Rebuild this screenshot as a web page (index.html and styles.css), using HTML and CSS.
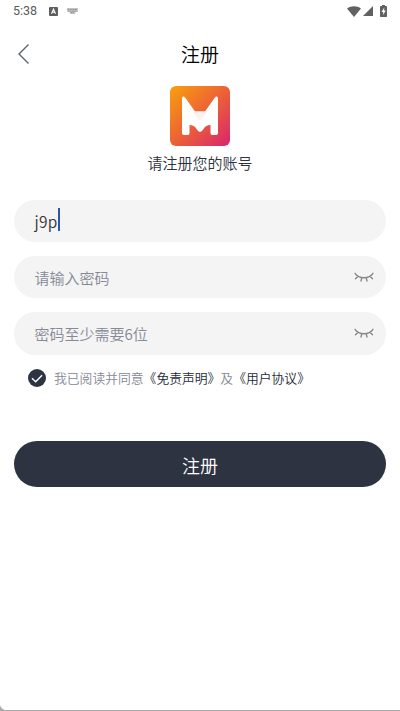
FILE: index.html
```html
<!DOCTYPE html>
<html lang="zh-CN">
<head>
<meta charset="utf-8">
<title>注册</title>
<link rel="stylesheet" href="styles.css">
</head>
<body>
<div class="screen">
  <header class="status">
    <span class="time">5:38</span>
    <svg class="app-badge" width="9" height="9" viewBox="0 0 9 9"><rect width="9" height="9" rx="1" fill="#5e5e5e"/><path d="M2.5 6.7 4.5 2.2 6.5 6.7M3.3 5.3h2.4" fill="none" stroke="#fff" stroke-width="1.1"/></svg>
    <svg class="keyboard" width="11" height="6" viewBox="0 0 11 6"><path d="M0 0h11v4H8.500L8 6H3L2.500 4H0z" fill="#c4c4c4"/><path d="M1 1.500h9M1.500 3.200h8M4 4.700h3" stroke="#888" stroke-dasharray="1 .7" fill="none"/></svg>
    <span class="spacer"></span>
    <svg width="14" height="11" viewBox="0 0 14 11"><path d="M0 2.600C4-.6 10-.6 14 2.600L7 11z" fill="#616161"/></svg>
    <svg class="signal" width="10" height="10" viewBox="0 0 10 10"><path d="M10 0v10H0z" fill="#616161"/></svg>
    <svg class="battery" width="7" height="12" viewBox="0 0 7 12"><path d="M2 0h3v1h1.200q.8 0 .8.800v9.400q0 .8-.8.800H.8q-.8 0-.8-.8V1.800Q0 1 .8 1H2z" fill="#616161"/><path d="M4.300 2.500 1.500 7h1.700v3L5.700 5.600H4.100z" fill="#fff"/></svg>
  </header>
  <nav class="bar">
    <svg width="12" height="20" viewBox="0 0 12 20"><path d="M10.500.600 1 10l9.500 9.400" fill="none" stroke="#5d636e" stroke-width="1.400"/></svg>
    <h1>注册</h1>
  </nav>
  <main>
    <svg class="logo" width="60" height="60" viewBox="0 0 60 60">
      <defs><linearGradient id="g" x1="0" y1="0" x2="1" y2="1"><stop offset="0" stop-color="#f9a10b"/><stop offset=".5" stop-color="#ec6236"/><stop offset="1" stop-color="#d9246f"/></linearGradient></defs>
      <rect width="60" height="60" rx="6" fill="url(#g)"/>
      <path d="M12 12.500Q12 10 14 10.500L15.500 12 25 25.500H35L44.500 12 46 10.500Q48 10 48 12.500V47Q48 49 46 49H42Q40.500 49 40.500 47V39Q35.500 39 33.500 43 30 49 26.500 43 24.500 39 19.500 39V47Q19.500 49 18 49H14Q12 49 12 47z" fill="#fff"/>
      <path d="M22 25.500H37L30 35z" fill="#fdf0ee"/>
    </svg>
    <p class="intro">请注册您的账号</p>
    <div class="field value"><span>j9p</span><i class="caret"></i></div>
    <div class="field"><span>请输入密码</span><svg class="eye" width="20" height="11" viewBox="0 0 20 11"><path d="M1 1.300Q4 5.700 10 5.700T19 1.300M4 4.300 1.500 6.800M16 4.300 18.500 6.800M7.700 6 7 9M12.300 6 13 9"/></svg></div>
    <div class="field last"><span>密码至少需要6位</span><svg class="eye" width="20" height="11" viewBox="0 0 20 11"><path d="M1 1.300Q4 5.700 10 5.700T19 1.300M4 4.300 1.500 6.800M16 4.300 18.500 6.800M7.700 6 7 9M12.300 6 13 9"/></svg></div>
    <div class="agree">
      <svg width="18" height="18" viewBox="0 0 18 18"><circle cx="9" cy="9" r="9" fill="#2d3340"/><path d="M4 9.300 7.700 12.800 14 6.200" fill="none" stroke="#fff" stroke-width="1.400"/></svg>
      <p>我已阅读并同意<b>《免责声明》</b>及<b>《用户协议》</b></p>
    </div>
    <div class="submit">注册</div>
  </main>
  <svg class="corner" width="5" height="5" viewBox="0 0 5 5"><path d="M0 0Q1 4 5 5H0z" fill="#aaa"/></svg>
</div>
</body>
</html>
```
FILE: styles.css
```css
* { box-sizing: border-box; }
body {
  margin: 0;
  background: #fff;
  font-family: "Noto Sans CJK SC", sans-serif;
  font-weight: 350;
}
svg { display: block; flex: none; }
h1, p { margin: 0; font-weight: 350; }
.screen {
  height: 711px;
  display: flex;
  flex-direction: column;
  border-bottom: 1px solid #a9a9a9;
  overflow: hidden;
}
.status {
  height: 22px;
  display: flex;
  align-items: center;
  padding: 0 13px;
}
.time {
  width: 36px;
  font: 400 12.500px/22px Roboto, sans-serif;
  color: #5a5a5a;
}
.keyboard { margin-left: 9px; }
.spacer { flex: 1; }
.signal { margin-left: 2px; }
.battery { margin-left: 7px; }
.bar {
  height: 64px;
  display: flex;
  align-items: center;
  padding: 0 18px;
}
h1 {
  flex: 1;
  margin-right: 12px;
  text-align: center;
  font-size: 19px;
  line-height: 28px;
  color: #000;
}
main {
  display: flex;
  flex-direction: column;
  padding: 0 14px;
}
.logo { align-self: center; }
.intro {
  height: 54px;
  text-align: center;
  font-size: 15px;
  line-height: 34px;
  color: #2d323d;
}
.field {
  height: 42px;
  margin-bottom: 14px;
  padding: 0 12px 0 20.500px;
  border-radius: 21px;
  background: #f4f4f4;
  display: flex;
  align-items: center;
  justify-content: space-between;
  font-size: 15px;
  color: #858995;
}
.field.value {
  justify-content: flex-start;
  font-size: 15.500px;
  letter-spacing: .3px;
  color: #333;
}
.caret {
  width: 2px;
  height: 23px;
  margin-bottom: 3px;
  background: #2858a8;
}
.field.last { height: 43px; margin-bottom: 0; }
.eye {
  fill: none;
  stroke: #8a8a8a;
  stroke-width: 1.400;
  stroke-linecap: round;
}
.agree {
  display: flex;
  align-items: center;
  height: 46px;
  padding-left: 13.500px;
  gap: 8.500px;
}
.agree p {
  font-size: 12.800px;
  line-height: 20px;
  color: #858995;
  white-space: nowrap;
}
.agree b { font-weight: 350; color: #252a36; }
.submit {
  height: 46px;
  margin-top: 40px;
  border-radius: 23px;
  background: #2d3340;
  color: #fff;
  text-align: center;
  font-size: 18px;
  line-height: 48px;
}
.corner { margin-top: auto; }
```
